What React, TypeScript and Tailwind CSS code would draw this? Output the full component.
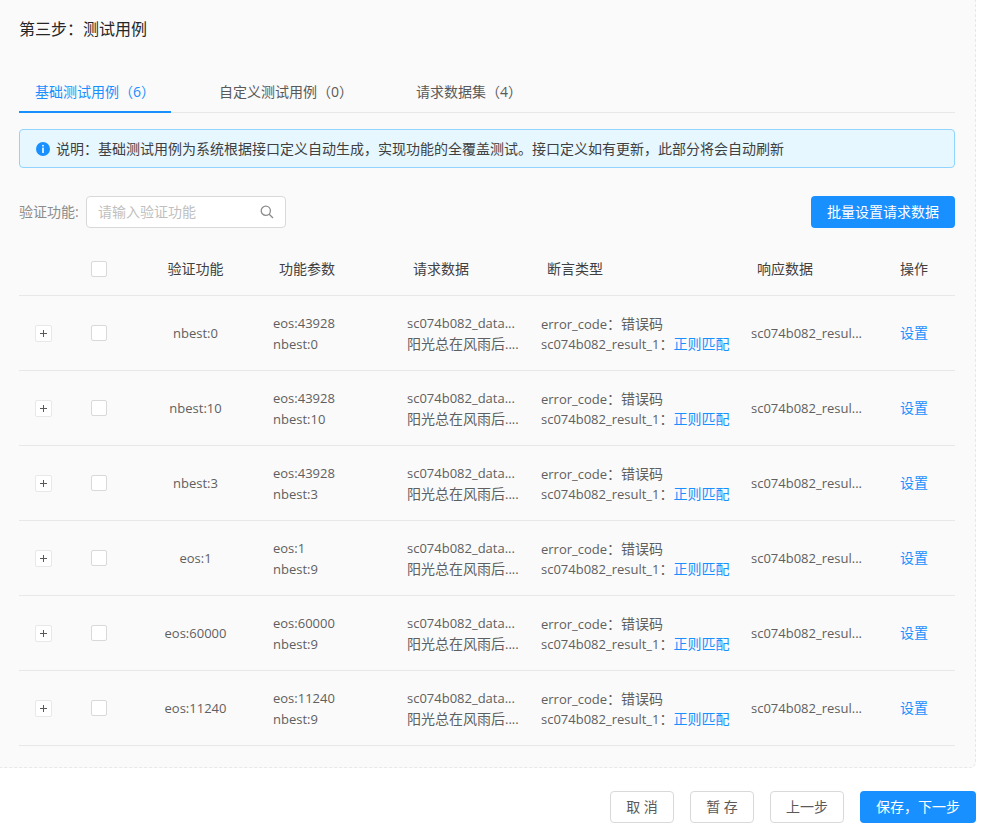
import React from "react";

const F = "font-['Open_Sans','Noto_Sans_CJK_SC',sans-serif]";
const COLS = "grid grid-cols-[45px_70px_123px_134px_134px_210px_144px_76px]";
const L = "text-[13px]";
const LOW = "h-[21px] leading-[23px]";

const rows = [
  { name: "nbest:0", a: "eos:43928", b: "nbest:0" },
  { name: "nbest:10", a: "eos:43928", b: "nbest:10" },
  { name: "nbest:3", a: "eos:43928", b: "nbest:3" },
  { name: "eos:1", a: "eos:1", b: "nbest:9" },
  { name: "eos:60000", a: "eos:60000", b: "nbest:9" },
  { name: "eos:11240", a: "eos:11240", b: "nbest:9" },
];

function Check() {
  return <span className="block w-4 h-4 rounded-[2px] border border-[#d9d9d9] bg-white" />;
}

function Row({ r }: { r: (typeof rows)[number] }) {
  return (
    <div className={`${COLS} h-[75px] items-center border-b border-[#e8e8e8] text-[#5f5f5f] leading-[21px]`}>
      <div className="pl-4">
        <span className="flex w-[17px] h-[17px] items-center justify-center rounded-[2px] border border-[#e8e8e8] bg-white">
          <svg width="9" height="9" viewBox="0 0 9 9" className="block">
            <path d="M4.5 1v7M1 4.5h7" stroke="#595959" strokeWidth="1" fill="none" />
          </svg>
        </span>
      </div>
      <div className="flex justify-center"><Check /></div>
      <div className={`text-center ${L}`}>{r.name}</div>
      <div className={`pl-4 ${L}`}><div className={LOW}>{r.a}</div><div className={LOW}>{r.b}</div></div>
      <div className="pl-4 whitespace-nowrap">
        <div className={`${L} ${LOW}`}>sc074b082_data...</div>
        <div className="h-[21px]">阳光总在风雨后<span className={L}>....</span></div>
      </div>
      <div className="pl-4 whitespace-nowrap">
        <div className={LOW}><span className={L}>error_code</span>：错误码</div>
        <div className="h-[21px]"><span className={L}>sc074b082_result_1</span>：<span className="text-[#1890ff]">正则匹配</span></div>
      </div>
      <div className={`pl-4 whitespace-nowrap ${L}`}>sc074b082_resul...</div>
      <div className="h-[21px] leading-[19px] text-center pr-[6px] text-[#1890ff]">设置</div>
    </div>
  );
}

export default function App() {
  return (
    <div className={`${F} w-[991px] h-[830px] bg-white text-sm overflow-hidden`}>
      <div className="w-[976px] h-[768px] bg-[#fafafa] border-r border-b border-dashed border-[#e8e8e8] rounded-br-[6px] pl-[19px] pr-[20px]">
        <div className="h-[58px] pt-[17px] text-base leading-6 text-[#262626]">第三步：测试用例</div>
        <div className="mt-[16px] h-[39px] flex border-b border-[#e8e8e8] leading-[36px]">
          <div className="h-[39px] px-4 border-b-2 border-[#1890ff] text-[#1890ff]">基础测试用例（6）</div>
          <div className="h-[38px] ml-8 px-4 text-[#595959]">自定义测试用例（0）</div>
          <div className="h-[38px] ml-[31px] px-4 text-[#595959]">请求数据集（4）</div>
        </div>
        <div className="mt-4 h-[39px] flex items-center gap-[6px] pl-4 rounded border border-[#91d5ff] bg-[#e6f7ff] text-[#404040]">
          <svg width="14" height="14" viewBox="0 0 14 14" className="block">
            <circle cx="7" cy="7" r="7" fill="#1890ff" />
            <rect x="6.2" y="2.9" width="1.6" height="1.6" fill="#fff" />
            <rect x="6.2" y="5.6" width="1.6" height="5.4" fill="#fff" />
          </svg>
          <span>说明：基础测试用例为系统根据接口定义自动生成，实现功能的全覆盖测试。接口定义如有更新，此部分将会自动刷新</span>
        </div>
        <div className="mt-[28px] flex items-center justify-between h-8">
          <div className="flex items-center">
            <span className="w-[67px] text-[#8c8c8c] whitespace-nowrap">验证功能:</span>
            <div className="w-[200px] h-8 flex items-center justify-between pl-[11px] pr-[11px] rounded border border-[#d9d9d9] bg-white text-[#bfbfbf]">
              <span>请输入验证功能</span>
              <svg width="14" height="14" viewBox="0 0 14 14" className="block" fill="none" stroke="#8c8c8c" strokeWidth="1.3">
                <circle cx="5.8" cy="5.8" r="4.6" />
                <path d="M9.2 9.2L13 13" />
              </svg>
            </div>
          </div>
          <button className="w-[144px] h-8 rounded bg-[#1890ff] text-white">批量设置请求数据</button>
        </div>
        <div className="mt-[14px]">
          <div className={`${COLS} h-[54px] items-center border-b border-[#e8e8e8] text-[#404040]`}>
            <div />
            <div className="flex justify-center"><Check /></div>
            <div className="text-center">验证功能</div>
            <div className="pl-[22px]">功能参数</div>
            <div className="pl-[22px]">请求数据</div>
            <div className="pl-[22px]">断言类型</div>
            <div className="pl-[22px]">响应数据</div>
            <div className="text-center pr-[6px]">操作</div>
          </div>
          {rows.map((r, i) => (
            <Row key={i} r={r} />
          ))}
        </div>
      </div>
      <div className="w-[976px] mt-[23px] flex justify-end text-[#595959]">
        <button className="w-16 h-8 rounded border border-[#d9d9d9] bg-white">取 消</button>
        <button className="w-16 h-8 ml-4 rounded border border-[#d9d9d9] bg-white">暂 存</button>
        <button className="w-[74px] h-8 ml-4 rounded border border-[#d9d9d9] bg-white">上一步</button>
        <button className="w-[116px] h-8 ml-4 rounded bg-[#1890ff] text-white">保存，下一步</button>
      </div>
    </div>
  );
}
